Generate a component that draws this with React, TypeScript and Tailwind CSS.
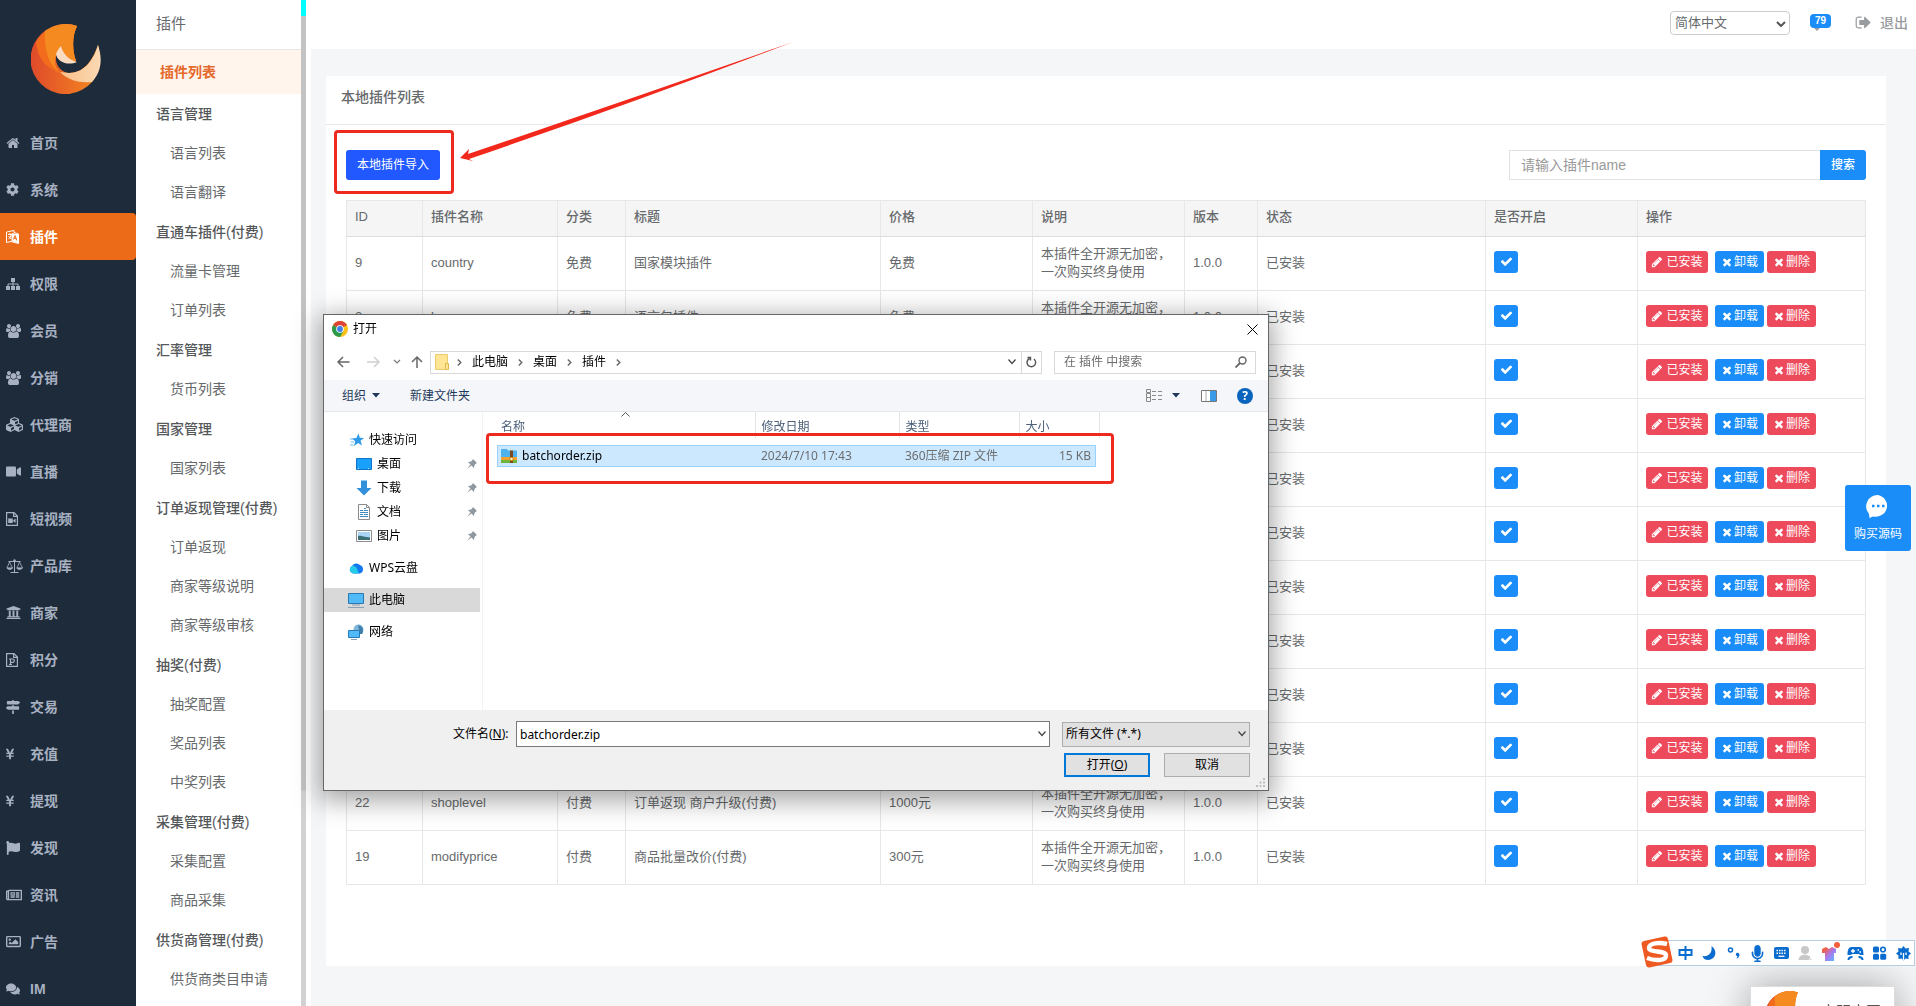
import type { ReactNode } from 'react';
import {
  FaCog,
  FaComments,
  FaCubes,
  FaFlag,
  FaMapSigns,
  FaMicrophone,
  FaRegImage,
  FaRegNewspaper,
  FaUniversity,
  FaVideo,
  FaYenSign,
} from 'react-icons/fa';

type MenuItem = { label: string; icon: ReactNode };
type Group = { title: string; children: string[] };
type Plugin = {
  id?: number;
  name?: string;
  kind?: string;
  title?: string;
  price?: string;
  note?: string;
  version?: string;
};

const Glyph = ({ d, size = 14 }: { d: string; size?: number }) => (
  <svg width={size} height={size} viewBox="0 0 1792 1792" fill="currentColor" className="shrink-0">
    <path d={d} />
  </svg>
);

const HOME =
  'M1472 992v480q0 26-19 45t-45 19h-384v-384h-256v384h-384q-26 0-45-19t-19-45v-480q0-1 .5-3t.5-3l575-474 575 474q1 2 1 6zm223-69l-62 74q-8 9-21 11h-3q-13 0-21-7l-692-577-692 577q-12 8-24 7-13-2-21-11l-62-74q-8-10-7-23.5t11-21.5l719-599q32-26 76-26t76 26l244 204v-195q0-14 9-23t23-9h192q14 0 23 9t9 23v408l219 182q10 8 11 21.5t-7 23.5z';
const TIMES =
  'M1490 1322q0 40-28 68l-136 136q-28 28-68 28t-68-28l-294-294-294 294q-28 28-68 28t-68-28l-136-136q-28-28-28-68t28-68l294-294-294-294q-28-28-28-68t28-68l136-136q28-28 68-28t68 28l294 294 294-294q28-28 68-28t68 28l136 136q28 28 28 68t-28 68l-294 294 294 294q28 28 28 68z';
const CHECK =
  'M1671 566q0 40-28 68l-724 724-136 136q-28 28-68 28t-68-28l-136-136-362-362q-28-28-28-68t28-68l136-136q28-28 68-28t68 28l294 295 656-657q28-28 68-28t68 28l136 136q28 28 28 68z';
const PENCIL =
  'M491 1536l91-91-235-235-91 91v107h128v128h107zm523-928q0-22-22-22-10 0-17 7l-542 542q-7 7-7 17 0 22 22 22 10 0 17-7l542-542q7-7 7-17zm-54-192l416 416-832 832h-416v-416zm683 96q0 53-37 90l-166 166-416-416 166-165q36-38 90-38 53 0 91 38l235 234q37 39 37 91z';
const SIGN_OUT =
  'M704 1440q0 4 1 20t.5 26.5-3 23.5-10 19.5-20.5 6.5h-320q-119 0-203.5-84.5t-84.5-203.5v-704q0-119 84.5-203.5t203.5-84.5h320q13 0 22.5 9.5t9.5 22.5q0 4 1 20t.5 26.5-3 23.5-10 19.5-20.5 6.5h-320q-66 0-113 47t-47 113v704q0 66 47 113t113 47h312l11.5 1 11.5 3 8 5.5 7 9 2 13.5zm928-544q0 26-19 45l-544 544q-19 19-45 19t-45-19-19-45v-288h-448q-26 0-45-19t-19-45v-384q0-26 19-45t45-19h448v-288q0-26 19-45t45-19 45 19l544 544q19 19 19 45z';

const PluginIcon = () => (
  <svg width="13" height="14" viewBox="0 0 13 14">
    <path d="M.5 2 8 .5v2L12.500 4v9.500L5 11.500l-4.500 1z" fill="none" stroke="#fff" strokeWidth="1" />
    <path d="M5.500 3 12.500 4.500v9L5.500 11z" fill="#fff" />
    <path d="M2 4.500h3.500M3.800 3v1.500M2.300 9c2-1 2.500-2.500 2.700-4.500M2.500 6l2.500 3" stroke="#fff" fill="none" />
    <path d="m7.500 9.500 1.500-4 1.800 5M8 8.300l2.500.7" stroke="#ec6b18" fill="none" />
  </svg>
);

const SitemapIcon = () => (
  <svg width="14" height="12" viewBox="0 0 14 12" fill="currentColor">
    <path d="M5 0h4v4H5zM0 8h4v4H0zM5 8h4v4H5zM10 8h4v4h-4z" />
    <path d="M7 3v6M2 9V6h10v3" fill="none" stroke="currentColor" />
  </svg>
);

const UsersIcon = () => (
  <svg width="15" height="14" viewBox="0 0 1920 1792" fill="currentColor">
    <path d="M593 896q-162 5-265 128h-134q-82 0-138-40.5t-56-118.5q0-353 124-353 6 0 43.5 21t97.5 42.5 119 21.5q67 0 133-23-5 37-5 66 0 159 93 287zm1071 637q0 120-73 189.5t-194 69.5h-874q-121 0-194-69.5t-73-189.5q0-53 3.5-103.5t14-109 26.5-108.5 43-97.5 62-81 85.5-53.5 111.5-20q10 0 43 21.5t73 48 107 48 135 21.5 135-21.5 107-48 73-48 43-21.5q61 0 111.5 20t85.5 53.5 62 81 43 97.5 26.5 108.5 14 109 3.5 103.5zm-1024-1277q0 106-75 181t-181 75-181-75-75-181 75-181 181-75 181 75 75 181zm704 384q0 159-112.500 271.500t-271.500 112.500-271.500-112.500-112.500-271.500 112.500-271.500 271.500-112.500 271.500 112.500 112.500 271.500zm576 225q0 78-56 118.500t-138 40.500h-134q-103-123-265-128 93-128 93-287 0-29-5-66 66 23 133 23 59 0 119-21.500t97.500-42.500 43.500-21q124 0 124 353zm-128-609q0 106-75 181t-181 75-181-75-75-181 75-181 181-75 181 75 75 181z" />
  </svg>
);

const FileVideoIcon = () => (
  <svg width="12" height="14" viewBox="0 0 12 14">
    <path d="M.6.6h7.400l3.400 3.400v9.400H.6zM7.600.6v3.800h3.800" fill="none" stroke="currentColor" strokeWidth="1.200" />
    <path d="M2.200 6.500h4.600v4.500H2.200zM6.800 8.700 9.600 6.500V11z" fill="currentColor" />
  </svg>
);

const FilePointIcon = () => (
  <svg width="12" height="14" viewBox="0 0 12 14" fill="none" stroke="currentColor" strokeWidth="1.200">
    <path d="M.6.6h7.400l3.400 3.400v9.400H.6zM7.600.6v3.800h3.800" />
    <path d="M3 6h3.500c2.500 0 2.500 3.300 0 3.300H4.600M4.500 6v5.500M3 11.500h3" />
  </svg>
);

const ScaleIcon = () => (
  <svg width="17" height="14" viewBox="0 0 17 14" fill="none" stroke="currentColor">
    <path d="M2.500 2.500h12M8.500 1v12M4.500 13.500h8" />
    <path d="M3.500 3 1 9h5.500zM13.500 3 11 9h5.500z" strokeWidth=".8" />
    <path d="M.7 9h6q-3 3.400-6 0zM10.500 9h6q-3 3.400-6 0z" fill="currentColor" strokeWidth=".5" />
    <circle cx="8.500" cy="1.500" r="1.200" fill="currentColor" stroke="none" />
  </svg>
);

const menu: MenuItem[] = [
  { label: '首页', icon: <Glyph d={HOME} /> },
  { label: '系统', icon: <FaCog size={13} /> },
  { label: '插件', icon: <PluginIcon /> },
  { label: '权限', icon: <SitemapIcon /> },
  { label: '会员', icon: <UsersIcon /> },
  { label: '分销', icon: <UsersIcon /> },
  { label: '代理商', icon: <FaCubes size={17} /> },
  { label: '直播', icon: <FaVideo size={15} /> },
  { label: '短视频', icon: <FileVideoIcon /> },
  { label: '产品库', icon: <ScaleIcon /> },
  { label: '商家', icon: <FaUniversity size={15} /> },
  { label: '积分', icon: <FilePointIcon /> },
  { label: '交易', icon: <FaMapSigns size={14} /> },
  { label: '充值', icon: <FaYenSign size={12} className="-ml-0.5" /> },
  { label: '提现', icon: <FaYenSign size={12} className="-ml-0.5" /> },
  { label: '发现', icon: <FaFlag size={14} /> },
  { label: '资讯', icon: <FaRegNewspaper size={16} /> },
  { label: '广告', icon: <FaRegImage size={15} /> },
  { label: 'IM', icon: <FaComments size={14} /> },
];

const groups: Group[] = [
  { title: '语言管理', children: ['语言列表', '语言翻译'] },
  { title: '直通车插件(付费)', children: ['流量卡管理', '订单列表'] },
  { title: '汇率管理', children: ['货币列表'] },
  { title: '国家管理', children: ['国家列表'] },
  { title: '订单返现管理(付费)', children: ['订单返现', '商家等级说明', '商家等级审核'] },
  { title: '抽奖(付费)', children: ['抽奖配置', '奖品列表', '中奖列表'] },
  { title: '采集管理(付费)', children: ['采集配置', '商品采集'] },
  { title: '供货商管理(付费)', children: ['供货商类目申请'] },
];

const note = '本插件全开源无加密，一次购买终身使用';

const plugins: Plugin[] = [
  { id: 9, name: 'country', kind: '免费', title: '国家模块插件', price: '免费', note, version: '1.0.0' },
  { id: 2, name: 'lang', kind: '免费', title: '语言包插件', price: '免费', note, version: '1.0.0' },
  {},
  {},
  {},
  {},
  {},
  {},
  {},
  {},
  { id: 22, name: 'shoplevel', kind: '付费', title: '订单返现 商户升级(付费)', price: '1000元', note, version: '1.0.0' },
  { id: 19, name: 'modifyprice', kind: '付费', title: '商品批量改价(付费)', price: '300元', note, version: '1.0.0' },
];

const columns = ['ID', '插件名称', '分类', '标题', '价格', '说明', '版本', '状态', '是否开启', '操作'];

function Logo({ size }: { size: number }) {
  return (
    <svg width={size} height={size} viewBox="0 0 70 70" className="shrink-0">
      <defs>
        <linearGradient id="ring" x1="0" y1="0" x2="1" y2="0">
          <stop offset="0" stopColor="#df4a2b" />
          <stop offset="1" stopColor="#f5891f" />
        </linearGradient>
        <linearGradient id="tail" x1="0" y1="0" x2="1" y2="0">
          <stop offset="0" stopColor="#f8c088" />
          <stop offset="1" stopColor="#fbd9b4" />
        </linearGradient>
      </defs>
      {/* full ring */}
      <path
        d="M46 2A35 35 0 1 0 61 58C67 50 71 38 67 21 61 38 52 49 38 49 26 48 22 34 27 28 31 36 38 40 45 37 41 26 41 12 46 2z"
        fill="url(#ring)"
      />
      <path d="M46 2A35 35 0 0 0 5 18C7 36 16 44 29 49 22 42 23 33 27 28 31 36 38 40 45 37 41 26 41 12 46 2z" fill="#f26c1c" />
      <path d="M46 2C35-2 24 0 14 7 13 22 16 40 29 49 22 42 23 33 27 28 31 36 38 40 45 37 41 26 41 12 46 2z" fill="#f58a21" />
      {/* light tail and inner flame */}
      <path d="M67 21C62 38 52 49 38 49L29 48C38 57 49 59 61 58 70 48 72 36 67 21z" fill="url(#tail)" />
      <path d="M30 22C32 30 38 36 46 38 37 42 26 38 25 30 26 27 28 24 30 22z" fill="#fbdcc0" />
    </svg>
  );
}

function MainMenu() {
  return (
    <nav className="w-[136px] shrink-0 bg-[#1e2b3a] text-[#a7b1c2]">
      <a href="#" aria-label="首页" className="flex h-[119px] justify-center pr-1 pt-6">
        <Logo size={70} />
      </a>
      {menu.map((item) => (
        <a
          key={item.label}
          href="#"
          className={
            item.label === '插件'
              ? 'flex h-[47px] items-center rounded-r-sm bg-[#ec6b18] pl-1.5 text-sm font-bold text-white'
              : 'flex h-[47px] items-center pl-1.5 text-sm font-semibold'
          }
        >
          <span className="flex w-6 items-center">{item.icon}</span>
          {item.label}
        </a>
      ))}
    </nav>
  );
}

function SubMenu() {
  return (
    <nav className="w-[165px] shrink-0 bg-white text-sm text-[#676a6c]">
      <div className="flex h-[50px] items-center border-b border-[#e7e7e7] pb-0.5 pl-5 text-[15px]">插件</div>
      <a href="#" className="flex h-11 items-center bg-[#fff5ec] pl-6 font-bold text-[#e5692b]">
        插件列表
      </a>
      {groups.map((group) => (
        <div key={group.title}>
          <div className="flex h-10 items-center pl-5 font-medium text-[#55585a]">{group.title}</div>
          {group.children.map((child) => (
            <a key={child} href="#" className="flex h-[39px] items-center pb-0.5 pl-[34px]">
              {child}
            </a>
          ))}
        </div>
      ))}
    </nav>
  );
}

function TopBar() {
  return (
    <header className="flex h-[49px] shrink-0 items-center justify-end bg-white pb-1 pr-2 text-[#999c9e]">
      <div className="relative">
        <select
          aria-label="语言"
          className="block h-6 w-[120px] appearance-none rounded border border-[#ccc] bg-white pl-1 text-[13px] leading-5 text-[#676a6c]"
        >
          <option>简体中文</option>
        </select>
        <svg width="10" height="6" viewBox="0 0 10 6" className="absolute right-1 top-2.5">
          <path d="m1 1 4 4 4-4" fill="none" stroke="#555" strokeWidth="2" />
        </svg>
      </div>
      <a
        href="#"
        className="relative mb-1 ml-5 flex h-3.5 w-[21px] items-center justify-center rounded-sm bg-[#1a8df8] text-[10px] font-bold text-white"
      >
        79
        <svg width="6" height="4" viewBox="0 0 6 4" className="absolute left-1 top-3.5">
          <path d="M0 0h6L3 3z" fill="#999c9e" />
        </svg>
      </a>
      <a href="#" className="ml-6 flex items-center gap-2 text-sm font-medium">
        <Glyph d={SIGN_OUT} size={17} />
        退出
      </a>
    </header>
  );
}

function PluginTable() {
  return (
    <table className="mt-5 w-full table-fixed border-collapse text-[13px] leading-[18px]">
      <colgroup>
        <col className="w-[76px]" />
        <col className="w-[135px]" />
        <col className="w-[68px]" />
        <col />
        <col className="w-[152px]" />
        <col className="w-[152px]" />
        <col className="w-[73px]" />
        <col className="w-[228px]" />
        <col className="w-[152px]" />
        <col className="w-[228px]" />
      </colgroup>
      <thead>
        <tr className="h-9 bg-[#f5f5f6]">
          {columns.map((column) => (
            <th key={column} className="border border-[#e7e7e7] border-b-[#ddd] px-2 pb-1 text-left font-medium">
              {column}
            </th>
          ))}
        </tr>
      </thead>
      <tbody>
        {plugins.map((plugin, index) => (
          <tr key={index} className="h-[54px] [&>td]:border [&>td]:border-[#e7e7e7] [&>td]:px-2">
            <td className="pb-0.5">{plugin.id}</td>
            <td className="pb-0.5">{plugin.name}</td>
            <td className="pb-0.5">{plugin.kind}</td>
            <td className="pb-0.5">{plugin.title}</td>
            <td className="pb-0.5">{plugin.price}</td>
            <td className="pb-0.5">{plugin.note}</td>
            <td className="pb-0.5">{plugin.version}</td>
            <td className="pb-0.5">已安装</td>
            <td className="pb-1">
              <button aria-label="是否开启" className="flex h-[22px] w-6 items-center justify-center rounded-[3px] bg-[#1a8df8] text-white">
                <Glyph d={CHECK} size={13} />
              </button>
            </td>
            <td className="pb-1">
              <div className="flex text-xs text-white">
                <button className="flex h-[22px] w-[62px] items-center justify-center gap-[3px] rounded-[3px] bg-[#ed4a5b]">
                  <Glyph d={PENCIL} size={12} />
                  已安装
                </button>
                <button className="ml-[7px] flex h-[22px] w-[49px] items-center justify-center gap-px rounded-[3px] bg-[#1a8df8]">
                  <Glyph d={TIMES} size={12} />
                  卸载
                </button>
                <button className="ml-[3px] flex h-[22px] w-[49px] items-center justify-center gap-px rounded-[3px] bg-[#ed4a5b]">
                  <Glyph d={TIMES} size={12} />
                  删除
                </button>
              </div>
            </td>
          </tr>
        ))}
      </tbody>
    </table>
  );
}

function PluginPanel() {
  return (
    <section className="flex-1 bg-white text-[#676a6c]">
      <h5 className="flex h-[49px] items-center border-b border-[#e7eaec] px-[15px] pb-1.5 text-sm font-medium">本地插件列表</h5>
      <div className="px-5 pt-[25px]">
        <div className="flex justify-between">
          <div className="relative">
            <button className="h-[30px] rounded-[3px] bg-[#2158ff] px-[11px] text-xs text-white">本地插件导入</button>
            {/* highlight frame and arrow pointing at the import button */}
            <span className="pointer-events-none absolute -bottom-3.5 -left-3 -right-3.5 -top-5 rounded-sm border-[3px] border-[#ee2a1f]" />
            <svg width="334" height="124" viewBox="0 0 334 124" className="pointer-events-none absolute -top-[108px] left-[114px]">
              <path d="M0 116 9 107 8 112 Q170 57 333 0 Q170 62 9 117L13 119z" fill="#f3281c" />
            </svg>
          </div>
          <form className="flex">
            <input
              aria-label="插件name"
              placeholder="请输入插件name"
              className="h-[30px] w-[311px] border border-r-0 border-[#e0e2e4] px-[11px] text-sm placeholder:text-[#999]"
            />
            <button type="button" className="h-[30px] w-[46px] rounded-r-[3px] bg-[#1a8df8] text-xs font-medium text-white">
              搜索
            </button>
          </form>
        </div>
        <PluginTable />
      </div>
    </section>
  );
}

const ChromeIcon = () => (
  <svg width="16" height="16" viewBox="0 0 16 16">
    <circle cx="8" cy="8" r="8" fill="#fbc116" />
    <path d="M8 8 1.100 4A8 8 0 0 1 15 4z" fill="#dd4437" />
    <path d="M8 8 1.100 4A8 8 0 0 0 8 16l3.500-6z" fill="#2a9a4d" />
    <circle cx="8" cy="8" r="3.800" fill="#fff" />
    <circle cx="8" cy="8" r="2.900" fill="#3f7de8" />
  </svg>
);

const StarIcon = () => (
  <svg width="14" height="14" viewBox="0 0 14 14">
    <path d="m8.500.5 1.300 4.200 4.200.3-3.400 2.700 1.400 4.800L8.200 10 4 13l1.200-4.800L2 5.500l4.400-.5z" fill="#2f9ae8" />
    <path d="M0 6h3M1 9h3M0 12h3.500" stroke="#6bb8f2" />
  </svg>
);

const DesktopIcon = () => (
  <svg width="16" height="16" viewBox="0 0 16 16">
    <path d="M.5 2.500h15v11H.5z" fill="#18a0fb" stroke="#1173c7" />
    <path d="M2 12.500h12" stroke="#b9e0fb" strokeDasharray="1 9" />
  </svg>
);

const DownloadIcon = () => (
  <svg width="16" height="16" viewBox="0 0 16 16">
    <path d="M5 .5h6V8h4.500L8 15.500.5 8H5z" fill="#3590db" />
  </svg>
);

const DocumentIcon = () => (
  <svg width="16" height="16" viewBox="0 0 16 16">
    <path d="M2.500.5h8l3 3v12h-11z" fill="#fff" stroke="#8b8b8b" />
    <path d="M10.500.5v3h3" fill="none" stroke="#8b8b8b" />
    <path d="M4 6.500h3M8 4.500h2M8 6.500h4M4 8.500h8M4 10.500h3M8 10.500h4M4 12.500h8" stroke="#3e8ac4" />
  </svg>
);

const PictureIcon = () => (
  <svg width="16" height="16" viewBox="0 0 16 16">
    <path d="M.5 2.500h15v11H.5z" fill="#fff" stroke="#8b8b8b" />
    <path d="M2 4h12v8H2z" fill="#a9d3f7" />
    <path d="M2 8c3-1 5 1 12 1.500V12H2z" fill="#3b6d75" />
  </svg>
);

const CloudIcon = () => (
  <svg width="15" height="12" viewBox="0 0 15 12">
    <path d="M4 11.500A4 4 0 0 1 3 4 5 5 0 0 1 11 3a4.500 4.500 0 0 1 0 8.500z" fill="#1478f0" />
    <path d="M4 11.500A4 4 0 0 1 3 4c4-1 5 3 7 7.500z" fill="#25cbe8" />
  </svg>
);

const PcIcon = () => (
  <svg width="16" height="16" viewBox="0 0 16 16">
    <path d="M.5 1.500h15v10H.5z" fill="#50b9f7" stroke="#2b79b4" />
    <path d="M4 13h8M0 15.500h16" stroke="#8ba1b5" />
  </svg>
);

const NetworkIcon = () => (
  <svg width="16" height="17" viewBox="0 0 16 17">
    <circle cx="10.500" cy="5.500" r="5" fill="#7fb6d8" />
    <path d="M10 1c3 1 5 2 5 6s-2 3-3 3z" fill="#3e7fab" />
    <path d="M.5 6.500h11v7H.5z" fill="#50b9f7" stroke="#2b79b4" />
    <path d="M3 15.500h6" stroke="#8ba1b5" />
  </svg>
);

const PinIcon = () => (
  <svg width="10" height="10" viewBox="0 0 10 10" className="ml-auto mr-[3px]">
    <path d="m6 0 4 4-1 .5L7.500 6 7 9 4.500 6.500 0 10l3.500-4.500L1 3l3-.5L5.500 1z" fill="#8f989f" />
  </svg>
);

const ZipIcon = () => (
  <svg width="16" height="14" viewBox="0 0 16 14">
    <path d="M0 0h6l1 1.500h9V10H0z" fill="#4db2ee" />
    <path d="M0 8h16v3H0z" fill="#f2a32f" />
    <path d="M0 11h16v3H0z" fill="#6fb53c" />
    <path d="M9 1.500h3V14H9z" fill="#7c4a1e" />
    <path d="M9 8.500h3v3H9z" fill="#fff2c0" stroke="#c98a1e" />
  </svg>
);

const Crumb = () => (
  <svg width="5" height="7" viewBox="0 0 5 7">
    <path d="m.8.5 3 3-3 3" fill="none" stroke="#666" strokeWidth="1.400" />
  </svg>
);

const Down = () => (
  <svg width="8" height="6" viewBox="0 0 8 6">
    <path d="m.5.5 3.500 4 3.500-4" fill="none" stroke="#444" strokeWidth="1.200" />
  </svg>
);

const quickAccess = [
  { label: '桌面', icon: <DesktopIcon /> },
  { label: '下载', icon: <DownloadIcon /> },
  { label: '文档', icon: <DocumentIcon /> },
  { label: '图片', icon: <PictureIcon /> },
];

function FileDialog() {
  return (
    <div
      role="dialog"
      aria-label="打开"
      className="fixed left-[323px] top-[314px] flex h-[477px] w-[946px] flex-col border border-[#666] bg-white font-['Noto_Sans','Noto_Sans_CJK_SC',sans-serif] text-xs text-black shadow-[0_6px_24px_4px_rgba(0,0,0,0.35)]"
    >
      <div className="flex h-[30px] shrink-0 items-center gap-[5px] pb-0.5 pl-2 pr-2.5">
        <ChromeIcon />
        打开
        <button aria-label="关闭" className="ml-auto">
          <svg width="11" height="11" viewBox="0 0 11 11">
            <path d="m.5.5 10 10m0-10-10 10" stroke="#000" fill="none" />
          </svg>
        </button>
      </div>

      <div className="flex h-[35px] shrink-0 items-center pb-px pl-[13px] pr-3">
        <svg width="88" height="14" viewBox="0 0 88 14" fill="none" className="mr-[5px] shrink-0">
          <path d="M12.500 7H1M6 2 1 7l5 5" stroke="#666" strokeWidth="1.500" />
          <path d="M30 7h11.500M37 2l5 5-5 5" stroke="#d0d0d0" strokeWidth="1.500" />
          <path d="m57 5 3 3 3-3" stroke="#777" strokeWidth="1.200" />
          <path d="M80 13V2M75 7l5-5 5 5" stroke="#666" strokeWidth="1.500" />
        </svg>
        <div className="flex h-[23px] flex-1 items-center border border-[#d9d9d9] pl-1">
          <svg width="14" height="16" viewBox="0 0 14 16" className="mr-2">
            <path d="M.5.5h12v15H.5z" fill="#ffe594" stroke="#eccb6c" />
            <path d="M10.500 9.500h3v6h-3z" fill="#ffe594" stroke="#e2b74b" />
          </svg>
          <span className="flex items-center gap-2.5">
            <Crumb />
            此电脑
            <Crumb />
            桌面
            <Crumb />
            插件
            <Crumb />
          </span>
          <button aria-label="展开" className="ml-auto mr-[5px]">
            <Down />
          </button>
          <button aria-label="刷新" className="flex h-full w-5 items-center justify-center border-l border-[#d9d9d9]">
            <svg width="11" height="12" viewBox="0 0 11 12" fill="none" stroke="#555" strokeWidth="1.400">
              <path d="M3.500 2.500a4.300 4.300 0 1 0 4.500.5M1.500 1.500h3v3" />
            </svg>
          </button>
        </div>
        <div className="ml-3 flex h-[23px] w-[202px] items-center border border-[#d9d9d9] pl-[9px] pr-2">
          <input aria-label="搜索" placeholder="在 插件 中搜索" className="w-full min-w-0 outline-none placeholder:text-[#6d6d6d]" />
          <svg width="12" height="12" viewBox="0 0 12 12" fill="none" stroke="#666" strokeWidth="1.400" className="shrink-0">
            <circle cx="7.500" cy="4.500" r="3.500" />
            <path d="m5 7-4.500 4.500" strokeWidth="1.800" />
          </svg>
        </div>
      </div>

      <div className="flex h-8 shrink-0 items-center border-b border-[#e4e6e9] bg-[#f4f6f9] pl-[18px] pr-[15px] text-[#1e395b]">
        <button className="flex items-center gap-1.5">
          组织
          <svg width="8" height="5" viewBox="0 0 8 5">
            <path d="M0 0h8L4 4.500z" fill="#1e395b" />
          </svg>
        </button>
        <button className="ml-[30px]">新建文件夹</button>
        <button aria-label="视图" className="ml-auto flex items-center gap-2.5">
          <svg width="16" height="13" viewBox="0 0 16 13" fill="none" stroke="#8a8a8a">
            <path d="M.5.5h4v3h-4zM.5 4.500h4v4h-4zM.5 8.500h4v4h-4z" />
            <path d="M6 2.500h10M6 6.500h10M6 10.500h10" strokeDasharray="4 2" />
          </svg>
          <svg width="8" height="5" viewBox="0 0 8 5">
            <path d="M0 0h8L4 4.500z" fill="#1e395b" />
          </svg>
        </button>
        <button aria-label="预览窗格" className="ml-[21px]">
          <svg width="16" height="12" viewBox="0 0 16 12">
            <path d="M.5.5h15v11H.5z" fill="#fff" stroke="#777" />
            <path d="M5 1v10" stroke="#aaa" />
            <path d="M9 1h6v10H9z" fill="#3c9be8" />
          </svg>
        </button>
        <button aria-label="帮助" className="ml-5 flex h-4 w-4 items-center justify-center rounded-full bg-[#0a63bd] font-bold text-white">
          ?
        </button>
      </div>

      <div className="flex min-h-0 flex-1">
        <div className="flex w-[159px] shrink-0 flex-col border-r border-[#f3f3f3] pr-0.5 pt-4">
          <div className="flex h-6 items-center gap-[5px] pl-[26px]">
            <StarIcon />
            快速访问
          </div>
          {quickAccess.map((entry) => (
            <div key={entry.label} className="flex h-6 items-center gap-[5px] pl-8">
              {entry.icon}
              {entry.label}
              <PinIcon />
            </div>
          ))}
          <div className="mt-2 flex h-6 items-center gap-[5px] pl-[25px]">
            <CloudIcon />
            WPS云盘
          </div>
          <div className="mt-2 flex h-6 items-center gap-[5px] bg-[#d9d9d9] pl-6">
            <PcIcon />
            此电脑
          </div>
          <div className="mt-2 flex h-6 items-center gap-[5px] pl-6">
            <NetworkIcon />
            网络
          </div>
        </div>

        <div className="relative flex-1 pl-3.5">
          <table className="table-fixed border-collapse">
            <colgroup>
              <col className="w-[258px]" />
              <col className="w-36" />
              <col className="w-[120px]" />
              <col className="w-[80px]" />
            </colgroup>
            <thead>
              <tr className="h-[26px] text-[#4c607a] [&>th]:border-r [&>th]:border-[#e5e5e5] [&>th]:text-left [&>th]:font-normal">
                <th className="relative pl-1 pt-1">
                  名称
                  <svg width="9" height="5" viewBox="0 0 9 5" className="absolute left-[124px] top-0">
                    <path d="m.5 4.500 4-4 4 4" fill="none" stroke="#555" />
                  </svg>
                </th>
                <th className="pl-1.5 pt-1">修改日期</th>
                <th className="pl-1.5 pt-1">类型</th>
                <th className="pl-1.5 pt-1">大小</th>
              </tr>
            </thead>
          </table>
          <div className="mt-[7px] flex h-[22px] w-[599px] items-center border border-[#99d1ff] bg-[#cce8ff] text-[#6d6d6d]">
            <span className="flex w-[263px] items-center gap-[5px] pl-[3px] text-black">
              <ZipIcon />
              batchorder.zip
            </span>
            <span className="w-36">2024/7/10 17:43</span>
            <span className="w-[120px]">360压缩 ZIP 文件</span>
            <span className="flex-1 pr-1 text-right">15 KB</span>
          </div>
          <span className="pointer-events-none absolute left-[3px] top-[21px] h-[51px] w-[628px] rounded-sm border-[3px] border-[#ee2a1f]" />
        </div>
      </div>

      <div className="relative flex h-20 shrink-0 flex-col gap-1.5 bg-[#f0f0f0] pr-[18px] pt-[11px]">
        <div className="flex items-center pl-[129px]">
          <label htmlFor="file-name" className="w-[63px]">
            文件名(<u>N</u>):
          </label>
          <div className="relative flex flex-1 items-center">
            <input id="file-name" defaultValue="batchorder.zip" className="h-[26px] w-full border border-[#7a7a7a] bg-white px-[3px]" />
            <span className="absolute right-1">
              <Down />
            </span>
          </div>
          <div className="relative ml-3 flex items-center">
            <select aria-label="文件类型" className="h-[25px] w-[188px] appearance-none border border-[#adadad] bg-[#e1e1e1] px-[3px]">
              <option>所有文件 (*.*)</option>
            </select>
            <span className="absolute right-1">
              <Down />
            </span>
          </div>
        </div>
        <div className="flex justify-end gap-3.5">
          <button className="h-6 w-[86px] border-2 border-[#0078d7] bg-[#e1e1e1]">
            打开(<u>O</u>)
          </button>
          <button className="h-6 w-[86px] border border-[#adadad] bg-[#e1e1e1]">取消</button>
        </div>
        <svg width="10" height="10" viewBox="0 0 10 10" fill="#bfbfbf" className="absolute bottom-0.5 right-0.5">
          <path d="M7 0h2v2H7zM7 3.500h2v2H7zM3.500 3.500h2v2h-2zM7 7h2v2H7zM3.500 7h2v2h-2zM0 7h2v2H0z" />
        </svg>
      </div>
    </div>
  );
}

function InputMethodBar() {
  return (
    <div className="fixed bottom-10 right-px flex h-[26px] items-center gap-[7px] border border-[#b8cfe2] bg-white pl-7 pr-0.5 text-[#0a6cce]">
      <svg width="32" height="32" viewBox="0 0 32 32" className="absolute -left-2 -top-[5px]">
        <rect x="2.500" y="2.500" width="27" height="27" rx="3" fill="#ee5a22" transform="rotate(-12 16 16)" />
        <path d="M26 8C18 6 8 7 8 12S25 14 25 19.500 14 25 6 22" fill="none" stroke="#fff" strokeWidth="4.500" />
      </svg>
      <svg width="17" height="16" viewBox="0 0 16 16" fill="none" stroke="currentColor" strokeWidth="2">
        <path d="M2 5h12v5H2zM8 1v14" />
      </svg>
      <svg width="17" height="16" viewBox="0 0 16 16" fill="currentColor">
        <path d="M10 1c6 4 5 13-3 14-3 0-5-1-6-4 6 1 10-3 9-10z" />
      </svg>
      <svg width="17" height="16" viewBox="0 0 16 16">
        <circle cx="5" cy="5" r="2" fill="none" stroke="currentColor" strokeWidth="1.500" />
        <path d="M11 8c4-1 4 4 0 6l1-3c-2 0-2-2-1-3z" fill="currentColor" />
      </svg>
      <FaMicrophone size={17} />
      <svg width="17" height="16" viewBox="0 0 16 16">
        <rect x=".5" y="2" width="15" height="12" rx="2" fill="currentColor" />
        <path d="M3 5.500h10M3 8.200h10" stroke="#fff" strokeWidth="1.500" strokeDasharray="1.500 1" />
        <path d="M5 11.300h6" stroke="#fff" strokeWidth="1.300" />
      </svg>
      <svg width="17" height="16" viewBox="0 0 16 16" fill="#c8c8c8">
        <circle cx="7.500" cy="5" r="4" />
        <path d="M1 15c0-7 13-7 13 0z" />
        <path d="M10 10h4l-2 5" fill="none" stroke="#fff" />
      </svg>
      <svg width="19" height="22" viewBox="0 0 19 22">
        <defs>
          <linearGradient id="shirt" x1="0" y1="0" x2="1" y2="1">
            <stop offset="0.200" stopColor="#f0604d" />
            <stop offset="0.550" stopColor="#a77af2" />
            <stop offset="1" stopColor="#4ec3fa" />
          </linearGradient>
        </defs>
        <path d="M1 7l4-2 3 2 3-2 4 2v4h-2v8H4v-8H1z" fill="url(#shirt)" />
        <circle cx="16" cy="3" r="3" fill="#f4603c" />
      </svg>
      <svg width="17" height="16" viewBox="0 0 16 16">
        <path d="M4 2h8c3 0 4 3 4 8h-3l-2-1H5l-2 1H0c0-5 1-8 4-8z" fill="currentColor" />
        <path d="M3.500 6h4M5.500 4v4M10 5h1.500M12 7h1.500" stroke="#fff" strokeWidth="1.400" />
        <path d="M1 15c0-2 2-3 4-3M15 15c0-2-2-3-4-3" fill="none" stroke="currentColor" strokeWidth="2" />
      </svg>
      <svg width="17" height="16" viewBox="0 0 16 16" fill="currentColor">
        <rect x="1.500" y="1.500" width="6" height="6" rx="1.500" />
        <circle cx="11.500" cy="4.500" r="2.300" fill="none" stroke="currentColor" strokeWidth="1.600" />
        <rect x="1.500" y="8.700" width="6" height="6" rx="1.500" />
        <rect x="8.700" y="8.700" width="6" height="6" rx="1.500" />
      </svg>
      <svg width="17" height="16" viewBox="0 0 16 16">
        <path d="m8 1 2 2.500 3.500-.5-.5 3.500L15.500 8.500 13 10.500v3.500l-3-.5-2 2-2-2-3 .5v-3.500L.5 8.500 3 6.500 2.500 3l3.500.5z" fill="currentColor" />
        <path d="M8 15V8M5.500 10V7.500M10.500 10V7.500" stroke="#fff" strokeWidth="1.300" />
      </svg>
    </div>
  );
}

export default function App() {
  return (
    <div className="flex h-screen overflow-hidden bg-white font-['Liberation_Sans','Noto_Sans_CJK_SC',sans-serif]">
      <MainMenu />
      <SubMenu />
      {/* submenu scroll bar */}
      <div className="flex w-[5px] shrink-0 flex-col bg-[#d2d2d2]">
        <div className="h-4 bg-[#00ffff]" />
        <div className="h-[77%] rounded-b-sm bg-[#c3c3c3]" />
      </div>
      <div className="flex min-w-0 flex-1 flex-col">
        <TopBar />
        <main className="ml-[5px] flex flex-1 bg-[#f5f6f8] pb-10 pl-[15px] pr-[30px] pt-[27px]">
          <PluginPanel />
        </main>
      </div>

      <button className="fixed right-[5px] top-[485px] flex h-[66px] w-[66px] flex-col items-center justify-center gap-0.5 rounded-[3px] bg-[#1a8df8] pt-1 text-xs leading-6 text-white">
        <svg width="26" height="26" viewBox="0 0 26 26">
          <path d="M13 1a11.500 11 0 1 1-5 21.500L4.500 24 4 20A11.500 11.500 0 0 1 13 1z" fill="#fff" />
          <path d="M7 12h2.500M12 12h2.500M17 12h2.500" stroke="#1a8df8" strokeWidth="2.500" />
        </svg>
        购买源码
      </button>

      <div className="fixed -bottom-[50px] right-[21px] flex h-[70px] w-[145px] items-start gap-1.5 overflow-hidden border border-[#ddd] bg-white pl-3.5 pt-1 text-[15px] text-[#555] shadow-[0_0_40px_rgba(0,0,0,0.35)]">
        <Logo size={50} />
        <span className="pt-2.5">商明商网</span>
      </div>

      <FileDialog />
      <InputMethodBar />
    </div>
  );
}
